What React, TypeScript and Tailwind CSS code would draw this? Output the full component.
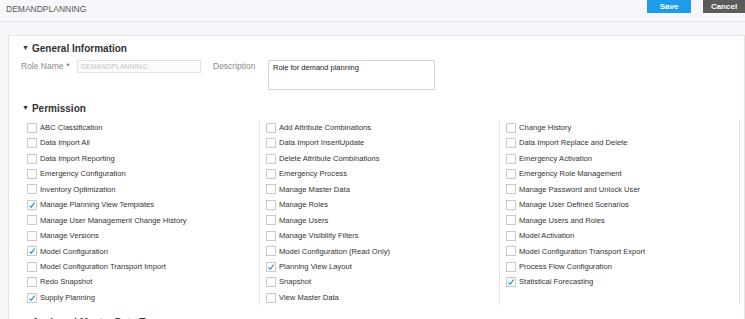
const col1 = [
  ['ABC Classification', false],
  ['Data Import All', false],
  ['Data Import Reporting', false],
  ['Emergency Configuration', false],
  ['Inventory Optimization', false],
  ['Manage Planning View Templates', true],
  ['Manage User Management Change History', false],
  ['Manage Versions', false],
  ['Model Configuration', true],
  ['Model Configuration Transport Import', false],
  ['Redo Snapshot', false],
  ['Supply Planning', true],
] as const;

const col2 = [
  ['Add Attribute Combinations', false],
  ['Data Import InsertUpdate', false],
  ['Delete Attribute Combinations', false],
  ['Emergency Process', false],
  ['Manage Master Data', false],
  ['Manage Roles', false],
  ['Manage Users', false],
  ['Manage Visibility Filters', false],
  ['Model Configuration (Read Only)', false],
  ['Planning View Layout', true],
  ['Snapshot', false],
  ['View Master Data', false],
] as const;

const col3 = [
  ['Change History', false],
  ['Data Import Replace and Delete', false],
  ['Emergency Activation', false],
  ['Emergency Role Management', false],
  ['Manage Password and Unlock User', false],
  ['Manage User Defined Scenarios', false],
  ['Manage Users and Roles', false],
  ['Model Activation', false],
  ['Model Configuration Transport Export', false],
  ['Process Flow Configuration', false],
  ['Statistical Forecasting', true],
] as const;

function Check({ label, checked }: { label: string; checked: boolean }) {
  return (
    <div className="flex items-center h-[15.45px]">
      <span className="relative w-[10px] h-[10px] border border-[#cacaca] bg-white ml-[6px] mr-[3px] shrink-0">
        {checked && (
          <svg viewBox="0 0 10 10" className="absolute left-[0px] top-[0px] w-[8px] h-[8px]">
            <path d="M2 5.4 L4 7.8 L8.2 2" fill="none" stroke="#1a8fe3" strokeWidth="1.4" />
          </svg>
        )}
      </span>
      <span className="text-[7.6px] text-[#333] whitespace-nowrap">{label}</span>
    </div>
  );
}

function Heading({ children }: { children: string }) {
  return (
    <div className="flex items-center h-[13px] text-[10px] font-bold text-[#333]">
      <span className="text-[7px] ml-[1px] mr-[3px]">▼</span>
      {children}
    </div>
  );
}

export default function App() {
  return (
    <div className="w-[745px] h-[319px] overflow-hidden bg-[#f4f6f9] font-['Liberation_Sans',Arial,sans-serif]">
      {/* header */}
      <div className="h-[22px] flex items-start border-b border-[#dfe2e6] bg-[#f5f7fa]">
        <div className="pl-[6px] pt-[3px] text-[8.5px] text-[#555]">DEMANDPLANNING</div>
        <div className="ml-auto flex">
          <button className="w-[44px] h-[13px] bg-[#1e9be9] text-white text-[8px] font-bold leading-[13px]">Save</button>
          <button className="w-[42px] h-[13px] ml-[12px] bg-[#5b5b5b] text-white text-[8px] font-bold leading-[13px]">Cancel</button>
        </div>
      </div>

      <div className="pl-[8px] pt-[13px]">
        <div className="bg-white border border-[#e2e4e8] pl-[12px] pt-[6px] h-[300px]">
          <Heading>General Information</Heading>
          <div className="flex items-start mt-[5px] h-[30px]">
            <div className="flex items-center h-[13px] w-[56px] text-[8.5px] text-[#8a8a8a] whitespace-nowrap">
              Role Name <span className="text-[#e0301e] ml-[3px]">*</span>
            </div>
            <div className="w-[124px] h-[13px] border border-[#e2e2e2] bg-[#fbfbfb] text-[7px] text-[#c6c6c6] pl-[3px] leading-[11px]">DEMANDPLANNING</div>
            <div className="ml-[12px] w-[55px] text-[8.5px] text-[#8a8a8a] leading-[12px]">Description</div>
            <div className="w-[167px] h-[30px] border border-[#d6d6d6] text-[7.5px] text-[#222] pl-[4px] pt-[1px]">Role for demand planning</div>
          </div>
          <div className="mt-[12px]">
            <Heading>Permission</Heading>
          </div>
          <div className="flex mt-[5px]">
            <div className="w-[239px] border-r border-[#e3e3e3]">
              {col1.map(([l, c]) => <Check key={l} label={l} checked={c} />)}
            </div>
            <div className="w-[240px] border-r border-[#e3e3e3]">
              {col2.map(([l, c]) => <Check key={l} label={l} checked={c} />)}
            </div>
            <div className="w-[240px] border-r border-[#e3e3e3]">
              {col3.map(([l, c]) => <Check key={l} label={l} checked={c} />)}
            </div>
          </div>
          <div className="mt-[11px]">
            <Heading>Assigned Master Data Types</Heading>
          </div>
        </div>
      </div>
    </div>
  );
}
